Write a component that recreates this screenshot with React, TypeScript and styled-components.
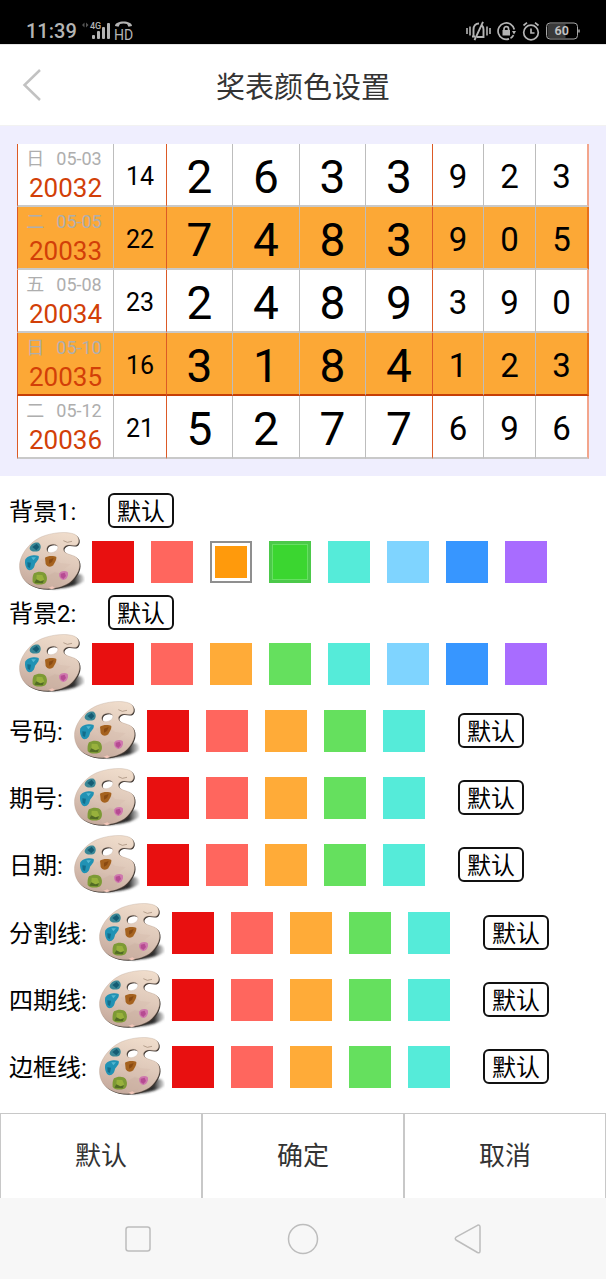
import React, { useId } from "react";
import styled, { createGlobalStyle } from "styled-components";

const GlobalStyle = createGlobalStyle`
  * { box-sizing: border-box; }
  body { margin: 0; background: #fff; }
  body, button { font-family: Roboto, "Noto Sans CJK SC", sans-serif; }
  button { margin: 0; padding: 0; background: none; border: 0; cursor: pointer; }
  svg { display: block; flex: none; }
`;

const Page = styled.div`
  display: flex;
  flex-direction: column;
  min-height: 100vh;
  background: #fff;
  color: #000;
`;

const StatusBar = styled.div`
  display: flex;
  justify-content: space-between;
  align-items: center;
  height: 44px;
  padding: 18px 26px 0;
  background: #000;
  color: #b4b4b4;
`;

const StatusGroup = styled.div<{ $gap: number }>`
  display: flex;
  align-items: center;
  gap: ${(p) => p.$gap}px;
`;

const Clock = styled.span`
  font-size: 20px;
  font-weight: 500;
  line-height: 24px;
`;

const Header = styled.header`
  display: grid;
  grid-template-columns: 64px 1fr 64px;
  align-items: center;
  height: 82px;
  border-top: 1px solid #e6e6e6;
  border-bottom: 1px solid #f2f2f2;
`;

const BackButton = styled.button`
  display: flex;
  justify-content: center;
  padding: 12px 0;
`;

const Title = styled.h1`
  margin: 0;
  padding-top: 5px;
  font-size: 29px;
  font-weight: 400;
  line-height: 40px;
  text-align: center;
  color: #333;
`;

const Preview = styled.section`
  padding: 18px 17px 17px;
  background: #efeefe;
`;

const DrawTable = styled.table`
  width: 100%;
  table-layout: fixed;
  border-collapse: separate;
  border-spacing: 0;
`;

const DrawRow = styled.tr<{ $tinted: boolean; $fourth: boolean }>`
  background: ${(p) => (p.$tinted ? "#fca836" : "#fff")};
  & > td {
    border-bottom: 2px solid ${(p) => (p.$fourth ? "#c63e06" : "#c9c9c9")};
  }
  & > td:last-child {
    border-right: 2px solid ${(p) => (p.$tinted ? "#e8701a" : "#f3a58c")};
  }
`;

const Cell = styled.td<{ $size: number; $framed?: boolean }>`
  height: 63px;
  padding: 4px 0 0;
  border-left: 1px solid ${(p) => (p.$framed ? "#dc5a26" : "#bdbdbd")};
  font-size: ${(p) => p.$size}px;
  line-height: 52px;
  text-align: center;
  vertical-align: middle;
`;

const IssueCell = styled(Cell)`
  padding: 0;
`;

const IssueDate = styled.div`
  display: flex;
  justify-content: center;
  gap: 12px;
  padding-right: 3px;
  font-size: 18px;
  line-height: 28px;
  color: #aeaeae;
`;

const IssueNumber = styled.div`
  font-size: 26px;
  line-height: 31px;
  color: #d23f08;
`;

const Settings = styled.main`
  flex: 1;
  padding: 17px 9px 13px;
`;

const SettingGroup = styled.div`
  & + & { margin-top: 1px; }
`;

const SettingHead = styled.div`
  display: flex;
  align-items: center;
  height: 35px;
`;

const SettingRow = styled.div<{ $indent?: boolean }>`
  display: flex;
  align-items: center;
  height: 67px;
  padding-left: ${(p) => (p.$indent ? 10 : 0)}px;
`;

const SettingLabel = styled.span<{ $width: number }>`
  flex: none;
  width: ${(p) => p.$width}px;
  padding-top: 2px;
  font-size: 24px;
  line-height: 34px;
  white-space: nowrap;
`;

const PaletteButton = styled.button`
  flex: none;
  margin-right: 7px;
`;

const Swatches = styled.div`
  display: flex;
  gap: 17px;
`;

const Swatch = styled.button<{ $color: string; $mark?: "chosen" | "pressed" }>`
  width: 42px;
  height: 42px;
  background: ${(p) => p.$color};
  ${(p) =>
    p.$mark === "chosen" &&
    "border: 2px solid #8f8f8f; box-shadow: inset 0 0 0 3px #fff;"}
  ${(p) =>
    p.$mark === "pressed" &&
    "border: 3px solid #4cc94a; box-shadow: inset 0 0 0 1px #66e062;"}
`;

const DefaultButton = styled.button<{ $spaced?: boolean }>`
  width: 66px;
  height: 35px;
  margin-left: ${(p) => (p.$spaced ? 33 : 0)}px;
  padding-top: 3px;
  border: 2px solid #111;
  border-radius: 6px;
  font-size: 24px;
  line-height: 28px;
  color: #000;
`;

const Actions = styled.footer`
  display: grid;
  grid-template-columns: repeat(3, 1fr);
`;

const ActionButton = styled.button`
  height: 85px;
  border: 1px solid #c8c8c8;
  border-bottom: 0;
  font-size: 26px;
  line-height: 36px;
  color: #333;
`;

const SystemNav = styled.nav`
  display: grid;
  grid-template-columns: repeat(3, 1fr);
  height: 81px;
  padding: 0 56px;
  background: #f7f7f7;
`;

const NavButton = styled.button`
  display: flex;
  align-items: center;
  justify-content: center;
`;

function SignalIcons() {
  return (
    <svg width="52" height="22" viewBox="0 0 52 22" fill="#b4b4b4" aria-hidden="true">
      <path d="M3.500 2.500v5L1 5zM5 2.500v5L7.500 5z" fill="#555" />
      <text x="9" y="9" fontSize="9" fontWeight="500" fontFamily="Roboto, sans-serif">4G</text>
      <rect x="11" y="15" width="3" height="4" rx="1" />
      <rect x="16" y="11" width="3" height="8" rx="1" />
      <rect x="21" y="7" width="3" height="12" rx="1" />
      <rect x="26" y="3" width="3" height="16" rx="1" />
      <path d="M34 6c0-6 17-6 17 0l-3.500.8-1.500-2.800q-3.500-1-7 0l-1.500 2.800z" />
      <text x="33" y="19.500" fontSize="14" fontWeight="400" fontFamily="Roboto, sans-serif">HD</text>
    </svg>
  );
}

function MutedIcon() {
  return (
    <svg width="25" height="20" viewBox="0 0 25 20" fill="none" stroke="#b4b4b4" strokeWidth="1.600" aria-hidden="true">
      <path d="M1 7v6M4 5.500v9M21 5.500v9M24 7v6" />
      <path d="M6 15.500h3M7.500 15V8.500c0-3.500 2-6 5.500-6M16 4.500c1 1 1.500 2.500 1.500 4v7.500H11M17 .8L8.500 19.200" strokeWidth="1.900" />
    </svg>
  );
}

function RotationLockIcon() {
  return (
    <svg width="19" height="20" viewBox="0 0 19 20" fill="none" stroke="#b4b4b4" strokeWidth="1.700" aria-hidden="true">
      <path d="M17.300 8.500A8.200 8.200 0 1 0 12 17.900M13.500 17.200q2-1 3-3" />
      <path d="M15 10h4l-2 3.500z" fill="#b4b4b4" stroke="none" />
      <rect x="5.500" y="9" width="7.500" height="5.500" fill="#b4b4b4" stroke="none" />
      <path d="M7 9.500V8a2.300 2.300 0 0 1 4.600 0v1.500" />
    </svg>
  );
}

function AlarmIcon() {
  return (
    <svg width="18" height="20" viewBox="0 0 18 20" fill="none" stroke="#b4b4b4" strokeWidth="1.700" aria-hidden="true">
      <circle cx="9" cy="11.500" r="7.300" />
      <path d="M9 7.500v4.500h3.500M1.500 4.500L5 1.700M16.500 4.500L13 1.700" />
    </svg>
  );
}

function BatteryIcon() {
  return (
    <svg width="34" height="18" viewBox="0 0 34 18" aria-hidden="true">
      <path d="M3.500 2h16v14h-16a2 2 0 0 1-2-2V4a2 2 0 0 1 2-2z" fill="#3a3a3a" />
      <rect x=".5" y="1" width="31" height="16" rx="3.500" fill="none" stroke="#a8a8a8" />
      <path d="M33 7.500v3" stroke="#a8a8a8" strokeWidth="1.500" />
      <text x="8.500" y="13.300" fontSize="12.500" fontWeight="600" fontFamily="Roboto, sans-serif" fill="#c4c4c4">60</text>
    </svg>
  );
}

function PaletteIcon() {
  const id = useId();
  const wood = `${id}-wood`;
  const shade = `${id}-shade`;
  const soft = `${id}-soft`;
  const body =
    "M29 132C24 94 58 50 98 34C132 21 174 19 194 28C208 35 210 53 200 60C191 65 181 58 171 61C157 66 157 78 170 85C184 92 199 91 206 106C214 126 203 150 184 168C162 188 118 196 84 188C52 181 32 160 29 132ZM112 66C107 76 113 84 124 83C137 82 146 72 143 64C139 55 118 56 112 66Z";
  return (
    <svg width="66" height="61" viewBox="27 18 198 183" aria-hidden="true">
      <defs>
        <linearGradient id={wood} x1="0.7" y1="0" x2="0.4" y2="1">
          <stop offset="0" stopColor="#efdccb" />
          <stop offset=".5" stopColor="#dfc9ba" />
          <stop offset="1" stopColor="#c6aa9d" />
        </linearGradient>
        <linearGradient id={shade} gradientUnits="userSpaceOnUse" x1="150" y1="0" x2="228" y2="0">
          <stop offset="0" stopColor="#111" />
          <stop offset=".55" stopColor="#333" />
          <stop offset="1" stopColor="#999" stopOpacity=".2" />
        </linearGradient>
        <filter id={soft} x="-20%" y="-20%" width="140%" height="140%">
          <feGaussianBlur stdDeviation="3" />
        </filter>
      </defs>
      <path d="M124 191C165 191 204 182 222 168C224 150 214 146 202 147L170 165Z" fill={`url(#${shade})`} filter={`url(#${soft})`} />
      <path d={body} fill="#3c342f" fillRule="evenodd" transform="translate(3 3)" />
      <path d={body} fill={`url(#${wood})`} fillRule="evenodd" stroke="#b8a394" strokeWidth="1" />
      <path d="M160 47l12 5 14-3" fill="none" stroke="#9b8470" strokeWidth="2" />
      <path d="M92 104l34-12 24 22 32 4-30 22-38-4z" fill="#d8c0b1" opacity=".6" />
      <path d="M100 160l34-18 36 6-18 26-40 12z" fill="#cdb3a4" opacity=".6" />
      <path d="M59 68C63 55 78 50 86 53C95 60 94 74 84 79C73 81 58 79 59 68Z" fill="#3a8796" />
      <path d="M67 66l13-10 8 10-9 10z" fill="#155c73" />
      <path d="M46 103C53 91 76 88 86 93C89 103 79 110 75 117C73 127 69 135 58 136C47 133 43 114 46 103Z" fill="#2192b4" />
      <path d="M64 97l14 0-8 9z" fill="#55b8d2" />
      <path d="M52 112l11 1-3 16-7-3z" fill="#126d8b" />
      <path d="M105 98C113 92 132 92 139 96C140 107 133 113 130 121C121 129 110 124 107 117Z" fill="#a5621f" />
      <path d="M117 104l14-5-5 12-9 5z" fill="#8a4a12" />
      <path d="M72 145C83 138 101 138 107 147C113 157 112 171 103 176C91 180 75 181 68 171C67 161 68 151 72 145Z" fill="#7d9a35" />
      <path d="M80 149l17 1 6 14-14 8-10-7z" fill="#98b13c" />
      <path d="M73 173l6-10 12 6 11-3-4 9z" fill="#526b25" />
      <path d="M148 145C153 137 166 136 173 141C177 152 170 163 161 165C151 165 145 153 148 145Z" fill="#cf78ae" />
      <path d="M152 146l12-3 4 10-8 9-8-6z" fill="#b64b92" />
      <path d="M115 188l12-4 8 5-10 4z" fill="#f1c5b8" />
    </svg>
  );
}

const colors = [
  { name: "红色", value: "#e81010" },
  { name: "浅红", value: "#ff665e" },
  { name: "橙色", value: "#ffab38" },
  { name: "绿色", value: "#65e05e" },
  { name: "青色", value: "#55ebd9" },
  { name: "浅蓝", value: "#7fd4ff" },
  { name: "蓝色", value: "#3796ff" },
  { name: "紫色", value: "#a86cff" },
];

const draws = [
  { day: "日", date: "05-03", issue: "20032", sum: 14, main: [2, 6, 3, 3], extra: [9, 2, 3] },
  { day: "二", date: "05-05", issue: "20033", sum: 22, main: [7, 4, 8, 3], extra: [9, 0, 5] },
  { day: "五", date: "05-08", issue: "20034", sum: 23, main: [2, 4, 8, 9], extra: [3, 9, 0] },
  { day: "日", date: "05-10", issue: "20035", sum: 16, main: [3, 1, 8, 4], extra: [1, 2, 3] },
  { day: "二", date: "05-12", issue: "20036", sum: 21, main: [5, 2, 7, 7], extra: [6, 9, 6] },
];

const columnWidths = [96, 53, 66, 67, 66, 67, 51, 52, 54];

function ColorPicker({ label, count, marked }: { label: string; count: number; marked?: boolean }) {
  return (
    <>
      <PaletteButton aria-label={`${label}调色板`}>
        <PaletteIcon />
      </PaletteButton>
      <Swatches role="group" aria-label={label}>
        {colors.slice(0, count).map((c, i) => {
          const mark = marked && i === 2 ? "chosen" : marked && i === 3 ? "pressed" : undefined;
          const fill = mark === "chosen" ? "#ff9a0c" : mark === "pressed" ? "#3bd630" : c.value;
          return <Swatch key={c.name} aria-label={c.name} $color={fill} $mark={mark} />;
        })}
      </Swatches>
    </>
  );
}

function BackgroundSetting({ label, marked }: { label: string; marked?: boolean }) {
  return (
    <>
      <SettingHead>
        <SettingLabel $width={99}>{label}:</SettingLabel>
        <DefaultButton>默认</DefaultButton>
      </SettingHead>
      <SettingRow $indent>
        <ColorPicker label={label} count={8} marked={marked} />
      </SettingRow>
    </>
  );
}

function LineSetting({ label, width }: { label: string; width: number }) {
  return (
    <SettingRow>
      <SettingLabel $width={width}>{label}:</SettingLabel>
      <ColorPicker label={label} count={5} />
      <DefaultButton $spaced>默认</DefaultButton>
    </SettingRow>
  );
}

export default function App() {
  return (
    <Page>
      <GlobalStyle />
      <StatusBar>
        <StatusGroup $gap={4}>
          <Clock>11:39</Clock>
          <SignalIcons />
        </StatusGroup>
        <StatusGroup $gap={6}>
          <MutedIcon />
          <RotationLockIcon />
          <AlarmIcon />
          <BatteryIcon />
        </StatusGroup>
      </StatusBar>

      <Header>
        <BackButton aria-label="返回">
          <svg width="20" height="32" viewBox="0 0 20 32" fill="none" stroke="#c2c2c2" strokeWidth="2.500">
            <path d="M18 1L2.500 16L18 31" />
          </svg>
        </BackButton>
        <Title>奖表颜色设置</Title>
      </Header>

      <Preview>
        <DrawTable>
          <colgroup>
            {columnWidths.map((w, i) => (
              <col key={i} width={w} />
            ))}
          </colgroup>
          <tbody>
            {draws.map((d, row) => (
              <DrawRow key={d.issue} $tinted={row % 2 === 1} $fourth={row === 3}>
                <IssueCell $size={26} $framed>
                  <IssueDate>
                    <span>{d.day}</span>
                    <span>{d.date}</span>
                  </IssueDate>
                  <IssueNumber>{d.issue}</IssueNumber>
                </IssueCell>
                <Cell $size={25}>{d.sum}</Cell>
                {d.main.map((n, i) => (
                  <Cell key={i} $size={46} $framed={i === 0}>{n}</Cell>
                ))}
                {d.extra.map((n, i) => (
                  <Cell key={i} $size={33} $framed={i === 0}>{n}</Cell>
                ))}
              </DrawRow>
            ))}
          </tbody>
        </DrawTable>
      </Preview>

      <Settings>
        <SettingGroup>
          <BackgroundSetting label="背景1" marked />
          <BackgroundSetting label="背景2" />
          <LineSetting label="号码" width={65} />
          <LineSetting label="期号" width={65} />
          <LineSetting label="日期" width={65} />
        </SettingGroup>
        <SettingGroup>
          <LineSetting label="分割线" width={90} />
          <LineSetting label="四期线" width={90} />
          <LineSetting label="边框线" width={90} />
        </SettingGroup>
      </Settings>

      <Actions>
        <ActionButton>默认</ActionButton>
        <ActionButton>确定</ActionButton>
        <ActionButton>取消</ActionButton>
      </Actions>

      <SystemNav>
        <NavButton aria-label="最近任务">
          <svg width="26" height="26" viewBox="0 0 26 26" fill="none" stroke="#bdbdbd" strokeWidth="1.500">
            <rect x="1" y="1" width="24" height="24" rx="2.500" />
          </svg>
        </NavButton>
        <NavButton aria-label="主页">
          <svg width="32" height="32" viewBox="0 0 32 32" fill="none" stroke="#bdbdbd" strokeWidth="1.500">
            <circle cx="16" cy="16" r="14.500" />
          </svg>
        </NavButton>
        <NavButton aria-label="后退">
          <svg width="28" height="30" viewBox="0 0 28 30" fill="none" stroke="#bdbdbd" strokeWidth="1.500" strokeLinejoin="round">
            <path d="M2 13.200L23.500 1.300Q26 .5 26 3V27Q26 29.500 23.500 28.500L2 16Q.5 14.600 2 13.200Z" />
          </svg>
        </NavButton>
      </SystemNav>
    </Page>
  );
}
